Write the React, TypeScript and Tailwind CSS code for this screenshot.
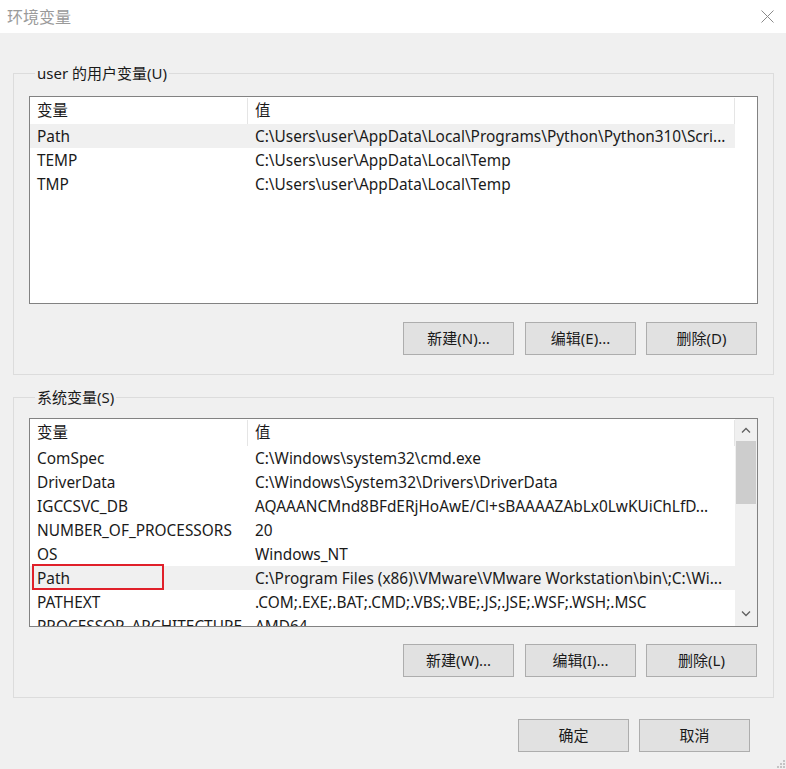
import type { ReactNode } from "react";

type EnvVar = { name: string; value: string };

const userVars: EnvVar[] = [
  {
    name: "Path",
    value: "C:\\Users\\user\\AppData\\Local\\Programs\\Python\\Python310\\Scri...",
  },
  { name: "TEMP", value: "C:\\Users\\user\\AppData\\Local\\Temp" },
  { name: "TMP", value: "C:\\Users\\user\\AppData\\Local\\Temp" },
];

const systemVars: EnvVar[] = [
  { name: "ComSpec", value: "C:\\Windows\\system32\\cmd.exe" },
  { name: "DriverData", value: "C:\\Windows\\System32\\Drivers\\DriverData" },
  {
    name: "IGCCSVC_DB",
    value: "AQAAANCMnd8BFdERjHoAwE/Cl+sBAAAAZAbLx0LwKUiChLfD...",
  },
  { name: "NUMBER_OF_PROCESSORS", value: "20" },
  { name: "OS", value: "Windows_NT" },
  {
    name: "Path",
    value: "C:\\Program Files (x86)\\VMware\\VMware Workstation\\bin\\;C:\\Wi...",
  },
  { name: "PATHEXT", value: ".COM;.EXE;.BAT;.CMD;.VBS;.VBE;.JS;.JSE;.WSF;.WSH;.MSC" },
  { name: "PROCESSOR_ARCHITECTURE", value: "AMD64" },
];

function WinButton({ children }: { children: ReactNode }) {
  return (
    <button
      type="button"
      className="w-[111px] h-[33px] bg-[#e1e1e1] border border-[#adadad] text-[15px] text-[#1a1a1a] leading-none"
    >
      {children}
    </button>
  );
}

function Group({ label, children }: { label: string; children: ReactNode }) {
  return (
    <fieldset className="border border-[#dcdcdc] px-[15px]">
      <legend className="ml-[6px] px-[2px] h-[20px] leading-[20px] text-[15px] text-[#1a1a1a]">
        {label}
      </legend>
      {children}
    </fieldset>
  );
}

function Chevron({ up }: { up?: boolean }) {
  return (
    <svg width="10" height="6" viewBox="0 0 10 6" className="text-[#606060]">
      <path
        d={up ? "M1 5.5 L5 1.5 L9 5.5" : "M1 0.5 L5 4.5 L9 0.5"}
        fill="none"
        stroke="currentColor"
        strokeWidth="1.3"
      />
    </svg>
  );
}

function VarList({
  rows,
  height,
  selected,
  scroll,
  marked,
}: {
  rows: EnvVar[];
  height: string;
  selected: number;
  scroll?: boolean;
  marked?: number;
}) {
  return (
    <div className={`relative flex border border-[#828282] bg-white overflow-hidden ${height}`}>
      <div className="w-[705px] shrink-0 flex flex-col">
        <div className="flex h-[27px] shrink-0 pt-[1px] text-[15.4px] text-[#1a1a1a]">
          <div className="w-[218px] border-r border-[#e5e5e5] pl-[7px] flex items-center">变量</div>
          <div className="flex-1 border-r border-[#e5e5e5] pl-[7px] flex items-center">值</div>
        </div>
        {rows.map((r, i) => (
          <div
            key={r.name}
            className={`relative flex h-[24px] shrink-0 pt-[1px] items-center text-[15.4px] text-[#1a1a1a] whitespace-nowrap ${
              i === selected ? "bg-[#f0f0f0]" : ""
            }`}
          >
            <div className="w-[219px] pl-[7px]">{r.name}</div>
            <div className="flex-1 pl-[6px] overflow-hidden">{r.value}</div>
            {marked === i && (
              <div className="absolute left-[2px] top-[-2px] w-[132px] h-[26px] border-2 border-[#e0202a]" />
            )}
          </div>
        ))}
      </div>
      {scroll && (
        <div className="flex-1 bg-[#f0f0f0] flex flex-col items-center">
          <div className="h-[22px] w-full flex items-center justify-center">
            <Chevron up />
          </div>
          <div className="w-full px-[1px]">
            <div className="h-[63px] bg-[#cdcdcd]" />
          </div>
          <div className="flex-1" />
          <div className="h-[24px] w-full flex items-center justify-center">
            <Chevron />
          </div>
        </div>
      )}
    </div>
  );
}

export default function App() {
  return (
    <div
      className="w-[786px] h-[769px] bg-[#f0f0f0] relative overflow-hidden"
      style={{ fontFamily: '"Noto Sans", "Noto Sans CJK SC", sans-serif' }}
    >
      <div className="h-[33px] bg-white flex items-center justify-between pl-[7px] pr-[12px]">
        <span className="text-[16px] text-[#9a9a9a]">环境变量</span>
        <svg width="13" height="13" viewBox="0 0 13 13">
          <path d="M0.5 0.5 L12.5 12.5 M12.5 0.5 L0.5 12.5" stroke="#8a8a8a" strokeWidth="1" />
        </svg>
      </div>

      <div className="pl-[13px] pr-[12px]">
        <div className="mt-[30px]">
          <Group label="user 的用户变量(U)">
            <div className="pt-[13px]">
              <VarList rows={userVars} height="h-[208px]" selected={0} />
            </div>
            <div className="flex justify-end gap-[11px] pr-[1px] pt-[18px] pb-[19px]">
              <WinButton>新建(N)...</WinButton>
              <div className="flex gap-[10px]">
                <WinButton>编辑(E)...</WinButton>
                <WinButton>删除(D)</WinButton>
              </div>
            </div>
          </Group>
        </div>

        <div className="mt-[12px]">
          <Group label="系统变量(S)">
            <div className="pt-[11px]">
              <VarList rows={systemVars} height="h-[209px]" selected={5} scroll marked={5} />
            </div>
            <div className="flex justify-end gap-[11px] pr-[1px] pt-[17px] pb-[20px]">
              <WinButton>新建(W)...</WinButton>
              <div className="flex gap-[10px]">
                <WinButton>编辑(I)...</WinButton>
                <WinButton>删除(L)</WinButton>
              </div>
            </div>
          </Group>
        </div>

        <div className="flex justify-end gap-[10px] pr-[24px] mt-[21px]">
          <WinButton>确定</WinButton>
          <WinButton>取消</WinButton>
        </div>
      </div>

      {/* size grip */}
      <svg width="10" height="10" viewBox="0 0 10 10" className="absolute right-[1px] bottom-[1px]">
        {[
          [8, 2],
          [5, 5],
          [8, 5],
          [2, 8],
          [5, 8],
          [8, 8],
        ].map(([x, y]) => (
          <rect key={`${x}-${y}`} x={x} y={y} width="2" height="2" fill="#c4c4c4" />
        ))}
      </svg>
    </div>
  );
}
